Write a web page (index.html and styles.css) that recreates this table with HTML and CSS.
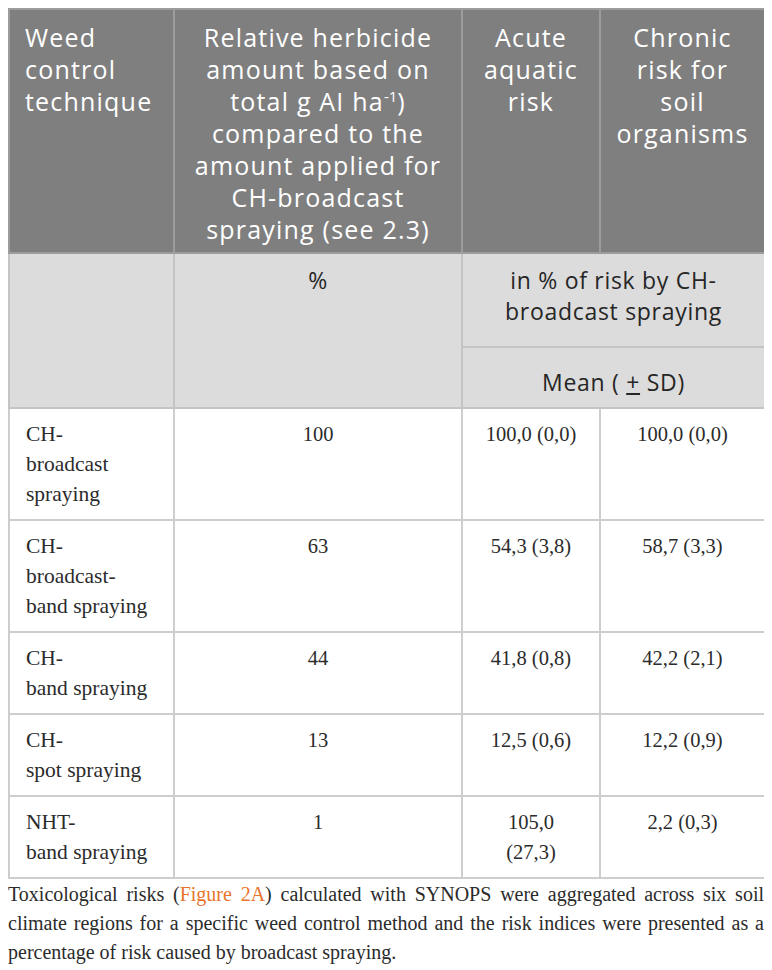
FILE: index.html
```html
<!DOCTYPE html>
<html lang="en">
<head>
    <meta charset="UTF-8">
    <meta name="viewport" content="width=device-width, initial-scale=1.0">
    <title>Table – Toxicological risks by weed control technique</title>
    <link rel="stylesheet" href="styles.css">
</head>
<body>
    <table class="risk-table">
        <colgroup>
            <col class="col-tech">
            <col class="col-amount">
            <col class="col-aquatic">
            <col class="col-soil">
        </colgroup>
        <thead>
            <tr class="head-row">
                <th class="left">Weed<br>control<br>technique</th>
                <th>Relative herbicide<br>amount based on<br>total g AI ha<sup>-1</sup>)<br>compared to the<br>amount applied for<br>CH-broadcast<br>spraying (see 2.3)</th>
                <th>Acute<br>aquatic<br>risk</th>
                <th>Chronic<br>risk for<br>soil<br>organisms</th>
            </tr>
            <tr class="sub-row">
                <td rowspan="2"></td>
                <td rowspan="2" class="unit">%</td>
                <td colspan="2" class="unit">in % of risk by CH-<br>broadcast spraying</td>
            </tr>
            <tr class="sub-row">
                <td colspan="2" class="unit mean">Mean ( <u>+</u> SD)</td>
            </tr>
        </thead>
        <tbody>
            <tr>
                <td class="left">CH-<br>broadcast<br>spraying</td>
                <td>100</td>
                <td>100,0 (0,0)</td>
                <td>100,0 (0,0)</td>
            </tr>
            <tr>
                <td class="left">CH-<br>broadcast-<br>band spraying</td>
                <td>63</td>
                <td>54,3 (3,8)</td>
                <td>58,7 (3,3)</td>
            </tr>
            <tr>
                <td class="left">CH-<br>band spraying</td>
                <td>44</td>
                <td>41,8 (0,8)</td>
                <td>42,2 (2,1)</td>
            </tr>
            <tr>
                <td class="left">CH-<br>spot spraying</td>
                <td>13</td>
                <td>12,5 (0,6)</td>
                <td>12,2 (0,9)</td>
            </tr>
            <tr>
                <td class="left">NHT-<br>band spraying</td>
                <td>1</td>
                <td>105,0<br>(27,3)</td>
                <td>2,2 (0,3)</td>
            </tr>
        </tbody>
    </table>

    <p class="caption">Toxicological risks (<a href="#" class="fig-link">Figure 2A</a>) calculated with SYNOPS were aggregated across six soil climate regions for a specific weed control method and the risk indices were presented as a percentage of risk caused by broadcast spraying.</p>
</body>
</html>
```

FILE: styles.css
```css
body {
    margin: 8px;
    background: #fff;
    color: #2b2b2b;
}

.risk-table {
    width: 756px;
    border-collapse: collapse;
    table-layout: fixed;
    font-family: "Liberation Serif", "Times New Roman", serif;
    font-size: 20.5px;
    line-height: 30px;
}

.col-tech { width: 165px; }
.col-amount { width: 288px; }
.col-aquatic { width: 138px; }
.col-soil { width: 165px; }

.risk-table th,
.risk-table td {
    border: 2px solid #cdcdcd;
    padding: 10px 8px;
    text-align: center;
    vertical-align: top;
}

.risk-table .left {
    text-align: left;
    padding-left: 16px;
}

.risk-table tbody .left {
    font-size: 21.5px;
}

/* grey header */
.head-row th {
    background: #7f7f7f;
    border-color: #9c9c9c;
    color: #fff;
    font-family: "Open Sans", "DejaVu Sans", sans-serif;
    font-weight: 400;
    font-size: 25px;
    letter-spacing: 1.2px;
    line-height: 32px;
    padding-top: 11px;
    padding-bottom: 7px;
}

.head-row th.left {
    padding-left: 15px;
}

.head-row th sup {
    font-size: 15px;
    letter-spacing: 0;
    line-height: 0;
    vertical-align: 9px;
}

/* units row */
.sub-row td {
    background: #dcdcdc;
    border-color: #c4c4c4;
}

.risk-table .unit {
    font-family: "Open Sans", "DejaVu Sans", sans-serif;
    font-size: 23px;
    letter-spacing: 0.7px;
    line-height: 31px;
    color: #262626;
    padding-top: 11px;
    padding-bottom: 19px;
}

.risk-table .mean {
    padding-top: 19px;
    padding-bottom: 9px;
}

.caption {
    margin: 1px 0 0;
    font-family: "Liberation Serif", "Times New Roman", serif;
    font-size: 20px;
    line-height: 29px;
    text-align: justify;
    color: #2b2b2b;
}

.fig-link {
    color: #e8742c;
    text-decoration: none;
}
```
